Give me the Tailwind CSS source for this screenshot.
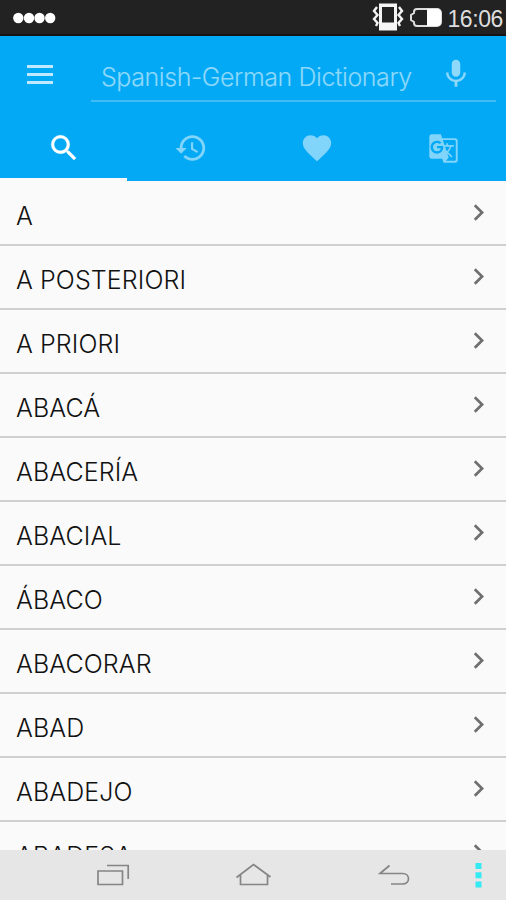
<!DOCTYPE html>
<html lang="en">
<head>
  <meta charset="UTF-8">
  <meta name="viewport" content="width=device-width, initial-scale=1.0">
  <title>Spanish-German Dictionary</title>
  <script src="https://cdn.jsdelivr.net/npm/@tailwindcss/browser@4"></script>
</head>
<body class="font-['Inter','Liberation_Sans',sans-serif] bg-[#fafafa]">
  <div class="h-[900px] w-[506px] flex flex-col overflow-hidden">
    <!-- Status bar -->
    <div class="h-9 shrink-0 bg-[#222222] border-b-2 border-[#151515] flex items-center justify-between pl-[13px] pr-[3px]">
      <div class="flex text-white pt-px">
        <svg class="w-[43px] h-[12px]" viewBox="0 0 43 12" fill="currentColor">
          <circle cx="5.3" cy="6" r="5.2"/>
          <circle cx="16" cy="6" r="5.2"/>
          <circle cx="26.500" cy="6" r="5.2"/>
          <circle cx="37.2" cy="6" r="5.2"/>
        </svg>
      </div>
      <div class="flex items-center">
        <svg class="w-[32px] h-[30px]" viewBox="0 0 32 30" fill="none" stroke="#f4f4f4">
          <path d="M7 1.500h18v27H7z" fill="#f4f4f4" stroke="none"/>
          <path d="M10 5h12v15.500H10z" fill="#222" stroke="none"/>
          <path d="M5 5L2 9l3.500 4L2 17l3.500 4L4 24M27 5l3 4-3.500 4 3.500 4-3.500 4 1.500 3" stroke-width="2.400"/>
        </svg>
        <svg class="w-[34px] h-[22px] ml-[5px] mr-[4px] mt-px" viewBox="0 0 34 22">
          <path d="M8 2h20a4 4 0 0 1 4 4v9a4 4 0 0 1-4 4H8a3 3 0 0 1-3-3v-1L2 13V8l3-2V5a3 3 0 0 1 3-3z" fill="#222" stroke="#ddd" stroke-width="2"/>
          <path d="M18 2h10a4 4 0 0 1 4 4v9a4 4 0 0 1-4 4H18z" fill="#fff"/>
        </svg>
        <span class="font-['Liberation_Sans',sans-serif] text-[23px] leading-none tracking-[-0.4px] text-[#dedede] pt-[5px]">16:06</span>
      </div>
    </div>

    <!-- Header -->
    <header class="h-[145px] shrink-0 bg-[#03a9f4] text-white flex flex-col">
      <div class="h-[66px] shrink-0 flex pl-[27px] pr-[10px]">
        <button class="w-[26px] mr-[38px] flex flex-col gap-[5px] pt-[29px] text-white/75">
          <span class="h-[3px] w-full bg-current"></span>
          <span class="h-[3px] w-full bg-current"></span>
          <span class="h-[3px] w-full bg-current"></span>
        </button>
        <div class="flex-1 flex items-start justify-between border-b-2 border-white/25 pl-[10px] pr-[23px]">
          <span class="text-[25px] leading-[30px] font-light text-white/55 pt-[26px] whitespace-nowrap tracking-[-0.43px]">Spanish-German Dictionary</span>
          <svg class="w-[34px] h-[34px] mt-[21px] shrink-0 text-white/55" viewBox="0 0 24 24" fill="currentColor"><path d="M12 14c1.660 0 3-1.340 3-3V5c0-1.660-1.340-3-3-3S9 3.340 9 5v6c0 1.660 1.340 3 3 3zm5.300-3c0 3-2.540 5.100-5.300 5.100S6.700 14 6.700 11H5c0 3.410 2.720 6.230 6 6.720V21h2v-3.280c3.280-.48 6-3.300 6-6.720h-1.700z"/></svg>
        </div>
      </div>
      <!-- Tabs -->
      <nav class="flex-1 grid grid-cols-4">
        <a href="#" class="flex justify-center pt-[29px] pl-px border-b-[3px] border-[#fafafa]">
          <svg class="w-[34px] h-[34px]" viewBox="0 0 24 24" fill="currentColor" stroke="currentColor" stroke-width="0.3"><path d="M15.500 14h-.79l-.28-.27A6.471 6.471 0 0 0 16 9.500 6.500 6.500 0 1 0 9.500 16c1.610 0 3.090-.59 4.230-1.570l.27.28v.79l5 4.990L20.490 19l-4.990-5zm-6 0C7.010 14 5 11.990 5 9.500S7.010 5 9.500 5 14 7.010 14 9.500 11.990 14 9.500 14z"/></svg>
        </a>
        <a href="#" class="flex justify-center pt-[29px] pl-[2px] text-white/50">
          <svg class="w-[34px] h-[34px]" viewBox="0 0 24 24" fill="currentColor"><path d="M13 3c-4.970 0-9 4.030-9 9H1l3.890 3.890.07.14L9 12H6c0-3.870 3.130-7 7-7s7 3.130 7 7-3.130 7-7 7c-1.930 0-3.680-.79-4.940-2.060l-1.420 1.420C8.270 19.990 10.510 21 13 21c4.970 0 9-4.030 9-9s-4.030-9-9-9zm-1 5v5l4.280 2.540.72-1.210-3.500-2.080V8H12z"/></svg>
        </a>
        <a href="#" class="flex justify-center pt-[29px] pl-[2px] text-white/50">
          <svg class="w-[34px] h-[34px]" viewBox="0 0 24 24" fill="currentColor"><path d="M12 21.350l-1.450-1.320C5.400 15.360 2 12.280 2 8.500 2 5.420 4.420 3 7.500 3c1.740 0 3.410.81 4.500 2.090C13.090 3.810 14.760 3 16.500 3 19.580 3 22 5.420 22 8.500c0 3.780-3.400 6.860-8.550 11.540L12 21.350z"/></svg>
        </a>
        <a href="#" class="flex justify-center pt-[31px] pl-[2px] text-white/50">
          <svg class="w-[31px] h-[31px]" viewBox="0 0 24 24" fill="currentColor"><path fill-rule="evenodd" d="M21 4H11l-1-3H3c-1.100 0-2 .9-2 2v15c0 1.100.9 2 2 2h8l1 3h9c1.100 0 2-.9 2-2V6c0-1.100-.9-2-2-2zM7 16c-2.760 0-5-2.240-5-5s2.240-5 5-5c1.350 0 2.480.5 3.350 1.300L9.030 8.570c-.38-.36-1.040-.78-2.030-.78-1.740 0-3.150 1.440-3.150 3.210S5.260 14.210 7 14.210c2.010 0 2.840-1.440 2.920-2.410H7v-1.710h4.680c.07.31.12.61.12 1.020C11.800 13.970 9.890 16 7 16zm6.170-5.420h3.700c-.43 1.250-1.110 2.430-2.050 3.470-.31-.35-.6-.72-.86-1.100l-.79-2.370zm8.330 9.920c0 .55-.45 1-1 1H14l2-2.500-1.040-3.100 3.100 3.100.92-.92-3.300-3.250.02-.02c1.130-1.250 1.930-2.690 2.400-4.220H20v-1.300h-4.530V8h-1.290v1.290h-1.440L11.460 5.500h9.040c.55 0 1 .45 1 1v14z"/></svg>
        </a>
      </nav>
    </header>

    <!-- Word list -->
    <ul id="words" class="flex-1 min-h-0 overflow-hidden"></ul>

    <!-- Navigation bar -->
    <footer class="h-[50px] shrink-0 bg-[#e6e6e6] text-[#858585]">
      <svg class="w-[506px] h-[50px]" viewBox="0 0 506 50" fill="none" stroke="currentColor" stroke-width="1.700">
        <path d="M98 21h24.500v13.500H98zM107 15.500h21.200V29"/>
        <path d="M236.500 27.500L253.500 14.500l17 12.500M240.500 25v9.500h27V25"/>
        <path d="M389.500 15.500L380 23.500h22.500c8 0 8 10.500 0 10.500H391"/>
        <path d="M475.500 13h6v6h-6zM475.500 22.200h6v6h-6zM475.500 31.500h6v6h-6z" fill="#35eaf2" stroke="none"/>
      </svg>
    </footer>
  </div>

  <template id="row">
    <li class="h-16 first:h-[65px] first:pt-px border-b-2 border-[#d0d0d0] flex items-center justify-between pl-4 pr-[11px]">
      <span class="word text-[25px] leading-[30px] font-light tracking-[0.1px] text-[#111] pt-[6px]"></span>
      <svg class="w-[33px] h-[33px] mb-[2px] text-[#707070]" viewBox="0 0 24 24" fill="currentColor"><path d="M10 6L8.590 7.410 13.170 12l-4.580 4.590L10 18l6-6z"/></svg>
    </li>
  </template>

  <script>
    const words = ['A', 'A POSTERIORI', 'A PRIORI', 'ABACÁ', 'ABACERÍA', 'ABACIAL', 'ÁBACO', 'ABACORAR', 'ABAD', 'ABADEJO', 'ABADESA'];
    const list = document.getElementById('words');
    const row = document.getElementById('row');
    words.forEach(word => {
      const item = row.content.cloneNode(true);
      item.querySelector('.word').textContent = word;
      list.appendChild(item);
    });
  </script>
</body>
</html>
